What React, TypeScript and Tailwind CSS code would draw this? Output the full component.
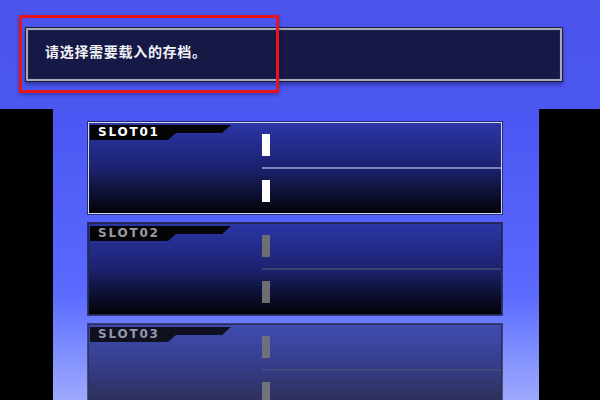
import React from "react";

interface Slot {
  id: string;
  active: boolean;
  fade?: boolean;
}

const slots: Slot[] = [
  { id: "SLOT01", active: true },
  { id: "SLOT02", active: false },
  { id: "SLOT03", active: false, fade: true },
];

function SlotTab({ label, active }: { label: string; active: boolean }) {
  return (
    <div className="relative w-[141px] h-[15px]">
      <svg className="absolute inset-0" width="141" height="15" viewBox="0 0 141 15">
        <polygon points="0,0 141,0 132,8 86,8 78,15 0,15" fill="#050508" />
      </svg>
      <span
        className={`relative block pl-[8px] leading-[15px] text-[12px] font-bold tracking-[1.8px] ${
          active ? "text-white" : "text-[#9a9aa2]"
        }`}
        style={{ fontFamily: '"DejaVu Sans", sans-serif' }}
      >
        {label}
      </span>
    </div>
  );
}

function SlotCard({ slot }: { slot: Slot }) {
  const border = slot.active ? "border-[#d4d6e6]" : "border-[#262848]";
  const bar = slot.active ? "bg-white" : "bg-[#6e6e72]";
  const bg = slot.fade
    ? "bg-linear-to-b from-[#3b47aa] via-[#2c3278] to-[#1c1c30]"
    : "bg-linear-to-b from-[#2b36a6] via-[#1c2270] to-[#040409]";
  return (
    <div
      className={`flex h-[92px] w-[414px] shrink-0 border ${border} ${bg} ${
        slot.fade ? "opacity-90" : ""
      } shadow-[0_0_0_1px_rgba(10,10,30,0.6)]`}
    >
      <div className="w-[173px] pt-[2px] pl-[1px]">
        <SlotTab label={slot.id} active={slot.active} />
      </div>
      <div className="flex flex-1 flex-col">
        <div className="flex h-[44px] items-center">
          <div className={`h-[22px] w-[8px] ${bar}`} />
        </div>
        <div className={`h-[2px] ${slot.active ? "bg-[#7c82b4]" : "bg-[#3e4272]"}`} />
        <div className="flex flex-1 items-center">
          <div className={`h-[22px] w-[8px] ${bar}`} />
        </div>
      </div>
    </div>
  );
}

export default function App() {
  return (
    <div
      className="relative flex h-[400px] w-[600px] flex-col overflow-hidden bg-black"
      style={{ fontFamily: '"Noto Sans CJK SC", "Noto Sans", sans-serif' }}
    >
      {/* Cabecera con el mensaje */}
      <div className="h-[109px] shrink-0 bg-linear-to-b from-[#4a53ec] to-[#4d58f2] pt-[27px] pl-[25px]">
        <div className="flex h-[55px] w-[538px] border border-[#1c1d42] bg-[#a9a9b0] p-[2px] shadow-[0_3px_4px_rgba(20,20,80,0.45)]">
          <div className="h-full w-full border border-[#1e2050] bg-[#161846] pt-[7px] pl-[16px]">
            <span className="text-[14px] font-bold tracking-[0.7px] text-[#f2f2f6]">
              请选择需要载入的存档。
            </span>
          </div>
        </div>
      </div>

      {/* Zona de ranuras */}
      <div className="flex flex-1">
        <div className="w-[53px] shrink-0 bg-black" />
        <div className="flex flex-1 flex-col gap-[9px] bg-linear-to-b from-[#4b56f2] via-[#5b69ff] via-60% to-[#aab1ff] pt-[13px] pl-[35px]">
          {slots.map((s) => (
            <SlotCard key={s.id} slot={s} />
          ))}
        </div>
        <div className="w-[61px] shrink-0 bg-black" />
      </div>

      {/* Marco rojo de anotación */}
      <div className="pointer-events-none absolute left-[19px] top-[15px] h-[78px] w-[260px] border-[3px] border-[#e8141c] shadow-[0_2px_4px_rgba(20,20,80,0.4)]" />
    </div>
  );
}
